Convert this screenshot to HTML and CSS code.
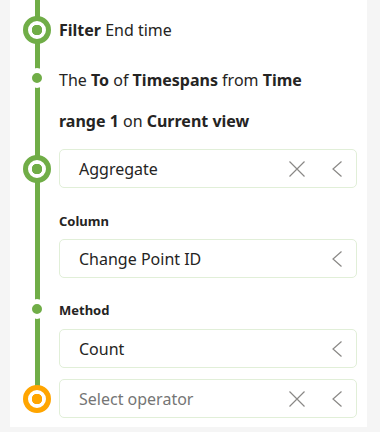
FILE: index.html
```html
<!DOCTYPE html>
<html lang="en">
<head>
  <meta charset="UTF-8">
  <title>Query steps</title>
  <link rel="stylesheet" href="styles.css">
</head>
<body>
  <div class="panel">
    <div class="step step-filter">
      <div class="rail"><span class="ring"></span></div>
      <div class="body">
        <p class="title"><b>Filter</b> End time</p>
      </div>
    </div>

    <div class="step step-desc">
      <div class="rail"><span class="dot"></span></div>
      <div class="body">
        <p class="desc">The <b>To</b> of <b>Timespans</b> from <b>Time range 1</b> on <b>Current view</b></p>
      </div>
    </div>

    <div class="step step-aggregate">
      <div class="rail"><span class="ring"></span></div>
      <div class="body">
        <div class="select">
          <span class="value">Aggregate</span>
          <svg class="icon" width="16" height="16" viewBox="0 0 16 16"><path d="M0.5 0.5 15.5 15.5 M15.5 0.5 0.5 15.5"/></svg>
          <svg class="icon chev" width="16" height="16" viewBox="0 0 16 16"><path d="M12.5 0.5 4 8 12.5 15.5"/></svg>
        </div>
        <div class="label label-column">Column</div>
        <div class="select">
          <span class="value">Change Point ID</span>
          <svg class="icon chev" width="16" height="16" viewBox="0 0 16 16"><path d="M12.5 0.5 4 8 12.5 15.5"/></svg>
        </div>
      </div>
    </div>

    <div class="step step-method">
      <div class="rail"><span class="dot"></span></div>
      <div class="body">
        <div class="label">Method</div>
        <div class="select select-method">
          <span class="value">Count</span>
          <svg class="icon chev" width="16" height="16" viewBox="0 0 16 16"><path d="M12.5 0.5 4 8 12.5 15.5"/></svg>
        </div>
      </div>
    </div>

    <div class="step step-last">
      <div class="rail"><span class="ring ring-pending"></span></div>
      <div class="body">
        <div class="select">
          <span class="value placeholder">Select operator</span>
          <svg class="icon" width="16" height="16" viewBox="0 0 16 16"><path d="M0.5 0.5 15.5 15.5 M15.5 0.5 0.5 15.5"/></svg>
          <svg class="icon chev" width="16" height="16" viewBox="0 0 16 16"><path d="M12.5 0.5 4 8 12.5 15.5"/></svg>
        </div>
      </div>
    </div>
  </div>
</body>
</html>
```

FILE: styles.css
```css
body { margin: 0; background: #f5f5f5; font-family: "Noto Sans", "Open Sans", sans-serif; color: #252423; }
p { margin: 0; }
b { font-weight: 700; }

.panel { margin-left: 10px; width: 357px; height: 427px; background: #fff; }

.step { display: grid; grid-template-columns: 49px 298px; }
.rail { background: linear-gradient(#70ad47, #70ad47) 25px 0 / 5px 100% no-repeat; }
.step-last .rail { background-size: 5px 25px; }

.ring { display: block; box-sizing: border-box; width: 28px; height: 28px; margin-left: 13px; border: 5px solid #70ad47; border-radius: 50%; background: #fff radial-gradient(circle, #70ad47 0 5px, transparent 5.5px); }
.ring-pending { border-color: #ffa500; background: #fff radial-gradient(circle, #ffa500 0 5px, transparent 5.5px); }
.dot { display: block; width: 10px; height: 10px; margin-left: 17px; border: 5px solid #fff; border-radius: 50%; background: #70ad47; }

.step-filter { height: 60px; }
.step-filter .rail { padding-top: 16px; }
.step-filter .title { font-size: 16px; line-height: 60px; }

.step-desc .rail { padding-top: 8px; }
.step-desc .desc { padding-right: 22px; font-size: 16px; line-height: 41px; }

.step-aggregate .rail { padding-top: 13px; }
.step-aggregate .body { padding-top: 7px; }

.step-method .rail { padding-top: 21px; }
.step-method .body { padding-top: 21px; }

.step-last .rail { padding-top: 17px; }
.step-last .body { padding-top: 11px; }

.label { font-size: 13px; font-weight: 700; line-height: 22px; }
.label-column { margin-top: 22px; margin-bottom: 7px; }
.select-method { margin-top: 8px; }

.select { box-sizing: border-box; height: 39px; display: flex; align-items: center; gap: 24px; padding: 0 11px 0 19px; border: 1px solid #e1efd8; border-radius: 5px; }
.value { flex: 1; font-size: 16px; }
.placeholder { color: #757575; }
.icon { fill: none; stroke: #8a8886; stroke-width: 1.2; }
```
